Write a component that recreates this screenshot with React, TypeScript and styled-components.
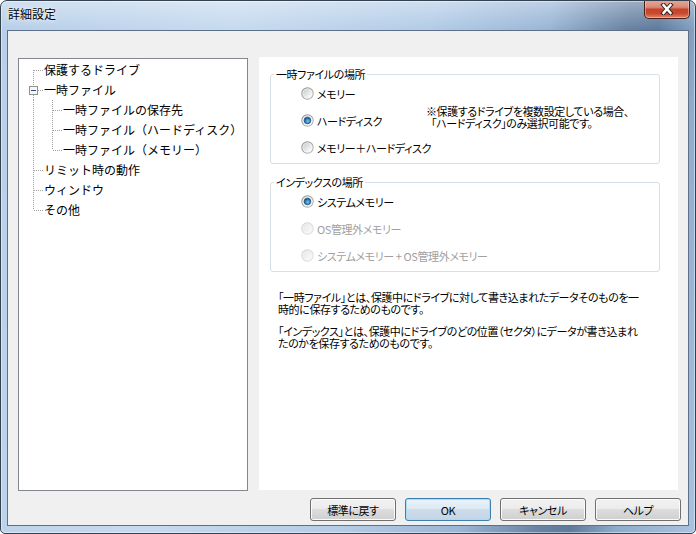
import React, { useId } from "react";
import styled, { createGlobalStyle, css } from "styled-components";

const GlobalStyle = createGlobalStyle`
  html, body {
    margin: 0;
    padding: 0;
    background: #ffffff;
  }
  body {
    font-family: "Noto Sans CJK JP", "Noto Sans", sans-serif;
    font-size: 12px;
    color: #000;
  }
`;

type TreeRow = {
  label: string;
  level: 0 | 1;
  rootUp?: boolean;
  rootDown?: boolean;
  expander?: boolean;
  childDown?: boolean;
};

const treeRows: TreeRow[] = [
  { label: "保護するドライブ", level: 0, rootUp: false, rootDown: true },
  { label: "一時ファイル", level: 0, rootUp: true, rootDown: true, expander: true },
  { label: "一時ファイルの保存先", level: 1, childDown: true },
  { label: "一時ファイル（ハードディスク）", level: 1, childDown: true },
  { label: "一時ファイル（メモリー）", level: 1, childDown: false },
  { label: "リミット時の動作", level: 0, rootUp: true, rootDown: true },
  { label: "ウィンドウ", level: 0, rootUp: true, rootDown: true },
  { label: "その他", level: 0, rootUp: true, rootDown: false },
];

const DOT = "#a0a0a0";

const TreeGutter: React.FC<{ row: TreeRow }> = ({ row }) => {
  if (row.level === 0) {
    const top = row.rootUp ? 0 : 10;
    const bottom = row.rootDown ? 20 : 10;
    return (
      <svg width="25" height="20" viewBox="0 0 25 20">
        {row.expander ? (
          <>
            <line x1="14.5" y1={top} x2="14.5" y2="6" stroke={DOT} strokeDasharray="1 1" />
            <line x1="14.5" y1="15" x2="14.5" y2={bottom} stroke={DOT} strokeDasharray="1 1" />
            <line x1="19" y1="10.5" x2="24" y2="10.5" stroke={DOT} strokeDasharray="1 1" />
            <rect x="10.5" y="6.5" width="8" height="8" fill="#f7f7f7" stroke="#919191" />
            <line x1="12" y1="10.5" x2="17" y2="10.5" stroke="#2b4f7e" />
          </>
        ) : (
          <>
            <line x1="14.5" y1={top} x2="14.5" y2={bottom} stroke={DOT} strokeDasharray="1 1" />
            <line x1="15" y1="10.5" x2="24" y2="10.5" stroke={DOT} strokeDasharray="1 1" />
          </>
        )}
      </svg>
    );
  }
  return (
    <svg width="44" height="20" viewBox="0 0 44 20">
      <line x1="14.5" y1="0" x2="14.5" y2="20" stroke={DOT} strokeDasharray="1 1" />
      <line x1="33.5" y1="0" x2="33.5" y2={row.childDown ? 20 : 10} stroke={DOT} strokeDasharray="1 1" />
      <line x1="34" y1="10.5" x2="43" y2="10.5" stroke={DOT} strokeDasharray="1 1" />
    </svg>
  );
};

const RadioIcon: React.FC<{ checked?: boolean; disabled?: boolean }> = ({ checked, disabled }) => {
  const id = useId().replace(/:/g, "");
  return (
    <svg width="13" height="13" viewBox="0 0 13 13">
      <defs>
        <linearGradient id={`${id}o`} x1="0" y1="0" x2="1" y2="1">
          <stop offset="0" stopColor={disabled ? "#cfcfcf" : "#8c8c8c"} />
          <stop offset="1" stopColor={disabled ? "#e2e2e2" : "#b8b8b8"} />
        </linearGradient>
        <linearGradient id={`${id}i`} x1="0.1" y1="0.1" x2="0.9" y2="0.9">
          <stop offset="0" stopColor={disabled ? "#e8e8e8" : "#cfcfcf"} />
          <stop offset="1" stopColor={disabled ? "#f9f9f9" : "#fcfcfc"} />
        </linearGradient>
        <radialGradient id={`${id}d`} cx="0.55" cy="0.6" r="0.65">
          <stop offset="0" stopColor="#7fc6f2" />
          <stop offset="0.55" stopColor="#2a7fbf" />
          <stop offset="1" stopColor="#0e4677" />
        </radialGradient>
      </defs>
      <circle cx="6.5" cy="6.5" r="6.2" fill={`url(#${id}o)`} />
      <circle cx="6.5" cy="6.5" r="5.2" fill="#f4f4f4" />
      <circle cx="6.5" cy="6.5" r="4.4" fill={`url(#${id}i)`} />
      {checked && <circle cx="6.5" cy="6.5" r="3.3" fill={`url(#${id}d)`} stroke="#174d7a" strokeWidth="0.7" />}
    </svg>
  );
};

const CloseGlyph: React.FC = () => (
  <svg width="14" height="12" viewBox="0 0 14 12">
    <path d="M3.5 2 L10.5 10 M10.5 2 L3.5 10" stroke="#3a2a28" strokeWidth="4.4" strokeLinecap="square" />
    <path d="M3.5 2 L10.5 10 M10.5 2 L3.5 10" stroke="#ffffff" strokeWidth="2.4" strokeLinecap="square" />
  </svg>
);

export default function App() {
  return (
    <>
      <GlobalStyle />
      <Window>
        <TitleBar>
          <Title>詳細設定</Title>
          <CloseButton aria-label="閉じる">
            <CloseGlyph />
          </CloseButton>
        </TitleBar>
        <Client>
          <Body>
            <Tree>
              {treeRows.map((row) => (
                <TreeItem key={row.label}>
                  <TreeGutter row={row} />
                  <TreeLabel>{row.label}</TreeLabel>
                </TreeItem>
              ))}
            </Tree>
            <Panel>
              <Group>
                <Legend>一時ファイルの場所</Legend>
                <RadioRow>
                  <RadioIcon />
                  <OptionLabel>メモリー</OptionLabel>
                </RadioRow>
                <RadioRow>
                  <RadioIcon checked />
                  <OptionLabel $width={109}>ハードディスク</OptionLabel>
                  <Note>
                    ※保護するドライブを複数設定している場合、
                    <br />
                    <NoteIndent>「ハードディスク」のみ選択可能です。</NoteIndent>
                  </Note>
                </RadioRow>
                <RadioRow>
                  <RadioIcon />
                  <OptionLabel>メモリー＋ハードディスク</OptionLabel>
                </RadioRow>
              </Group>
              <Group $spaced>
                <Legend>インデックスの場所</Legend>
                <RadioRow>
                  <RadioIcon checked />
                  <OptionLabel>システムメモリー</OptionLabel>
                </RadioRow>
                <RadioRow>
                  <RadioIcon disabled />
                  <OptionLabel $disabled>OS管理外メモリー</OptionLabel>
                </RadioRow>
                <RadioRow>
                  <RadioIcon disabled />
                  <OptionLabel $disabled>システムメモリー + OS管理外メモリー</OptionLabel>
                </RadioRow>
              </Group>
              <Description>
                <p>
                  「一時ファイル」とは、保護中にドライブに対して書き込まれたデータそのものを一
                  <br />
                  時的に保存するためのものです。
                </p>
                <p>
                  「インデックス」とは、保護中にドライブのどの位置（セクタ）にデータが書き込まれ
                  <br />
                  たのかを保存するためのものです。
                </p>
              </Description>
            </Panel>
          </Body>
          <Footer>
            <Button>標準に戻す</Button>
            <Button $default>OK</Button>
            <Button>キャンセル</Button>
            <Button>ヘルプ</Button>
          </Footer>
        </Client>
      </Window>
    </>
  );
}

const uiText = css`
  font-size: 11px;
  letter-spacing: -0.4px;
  font-feature-settings: "palt";
`;

const Window = styled.div`
  width: 696px;
  height: 534px;
  box-sizing: border-box;
  display: flex;
  flex-direction: column;
  border: 1px solid #34414f;
  border-radius: 7px 7px 5px 5px;
  overflow: hidden;
  background:
    linear-gradient(180deg, rgba(255, 255, 255, 0.35) 0px, rgba(255, 255, 255, 0) 28px),
    linear-gradient(
      100deg,
      #b7cfe9 0%,
      #c6daef 30%,
      #b3cce7 55%,
      #9ab6d6 70%,
      #6883a3 80%,
      #5f7b9c 84%,
      #8eaccd 90%,
      #a9c3e0 100%
    );
  box-shadow: inset 0 0 0 1px rgba(255, 255, 255, 0.45);
`;

const TitleBar = styled.div`
  height: 29px;
  flex: none;
  display: flex;
  justify-content: space-between;
  align-items: flex-start;
`;

const Title = styled.div`
  padding: 6px 0 0 7px;
  font-size: 12px;
  line-height: 14px;
  color: #000;
  text-shadow: 0 0 6px rgba(255, 255, 255, 0.9), 0 0 2px rgba(255, 255, 255, 0.9);
`;

const CloseButton = styled.button`
  width: 46px;
  height: 19px;
  margin: -1px 5px 0 0;
  padding: 0;
  display: flex;
  align-items: center;
  justify-content: center;
  border: 1px solid #4a1f18;
  border-top: none;
  border-radius: 0 0 5px 5px;
  background: linear-gradient(
    180deg,
    #e7a898 0%,
    #d98a77 40%,
    #c5432b 52%,
    #c94a30 75%,
    #e2876a 100%
  );
  box-shadow: inset 0 0 0 1px rgba(255, 220, 210, 0.45);
`;

const Client = styled.div`
  flex: 1;
  margin: 0 6px 7px 6px;
  border: 1px solid #5d7088;
  background: #f0f0f0;
  display: flex;
  flex-direction: column;
`;

const Body = styled.div`
  display: flex;
  align-items: flex-start;
  gap: 11px;
  padding: 26px 10px 0 10px;
`;

const Tree = styled.div`
  flex: none;
  width: 230px;
  height: 433px;
  margin-top: 1px;
  box-sizing: border-box;
  border: 1px solid #828790;
  background: #fff;
  padding-top: 1px;
`;

const TreeItem = styled.div`
  display: flex;
  align-items: center;
  height: 20px;

  svg {
    flex: none;
    display: block;
  }
`;

const TreeLabel = styled.span`
  font-size: 12px;
  line-height: 16px;
  white-space: nowrap;
  color: #000;
`;

const Panel = styled.div`
  flex: 1;
  min-width: 0;
  height: 433px;
  background: #fff;
  padding: 11px 18px 0 11px;
  box-sizing: border-box;
  overflow: hidden;
`;

const Group = styled.fieldset<{ $spaced?: boolean }>`
  margin: ${(p) => (p.$spaced ? "12px" : "0")} 0 0 0;
  padding: 0 0 2px 0;
  min-width: 0;
  border: 1px solid #d5dfe5;
  border-radius: 3px;
  box-shadow: inset 1px 1px 0 #fff;
`;

const Legend = styled.legend`
  margin-left: 3px;
  padding: 0 2px;
  line-height: 12px;
  color: #000;
  ${uiText}
`;

const RadioRow = styled.div`
  display: flex;
  align-items: center;
  height: 27px;
  padding-left: 30px;

  svg {
    flex: none;
    display: block;
  }
`;

const OptionLabel = styled.span<{ $disabled?: boolean; $width?: number }>`
  margin-left: 3px;
  line-height: 12px;
  white-space: nowrap;
  ${uiText}
  color: ${(p) => (p.$disabled ? "#a0a0a0" : "#000")};
  ${(p) =>
    p.$width &&
    css`
      width: ${p.$width}px;
    `}
`;

const Note = styled.div`
  margin-top: -6px;
  line-height: 11.5px;
  white-space: nowrap;
  ${uiText}
`;

const NoteIndent = styled.span`
  padding-left: 5px;
`;

const Description = styled.div`
  margin-top: 19px;
  padding-left: 8px;
  line-height: 12px;
  white-space: nowrap;
  ${uiText}

  p {
    margin: 0 0 10px 0;
  }
`;

const Footer = styled.div`
  display: flex;
  justify-content: flex-end;
  gap: 9px;
  padding: 7px 7px 0 0;
`;

const Button = styled.button<{ $default?: boolean }>`
  width: 86px;
  height: 23px;
  padding: 0;
  font-family: "Noto Sans CJK JP", "Noto Sans", sans-serif;
  line-height: 12px;
  ${uiText}
  color: #000;
  border: 1px solid #707070;
  border-radius: 3px;
  background: linear-gradient(180deg, #f2f2f2 0%, #ebebeb 50%, #dddddd 50%, #cfcfcf 100%);
  box-shadow: inset 0 0 0 1px #fbfbfb;
  ${(p) =>
    p.$default &&
    css`
      border-color: #3c7fb1;
      background: linear-gradient(180deg, #eaf3fa 0%, #dce9f3 50%, #cddcea 50%, #c3d5e5 100%);
      box-shadow: inset 0 0 0 1px #a9ddf5;
    `}
`;
